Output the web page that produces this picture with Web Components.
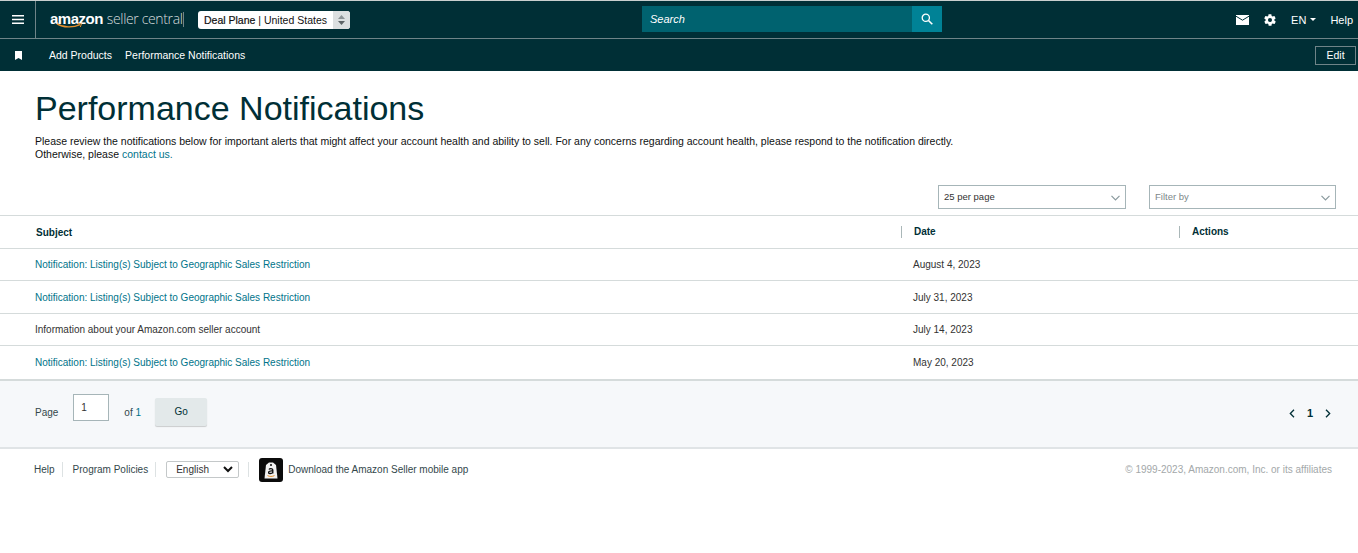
<!DOCTYPE html>
<html lang="en">
<head>
<meta charset="utf-8">
<title>Performance Notifications</title>
<style>
  html, body { margin: 0; padding: 0; background: #fff; }
  body { font-family: "Liberation Sans", Arial, sans-serif; color: #002f36; width: 1358px; height: 553px; overflow: hidden; }
</style>
</head>
<body>
<sc-topbar></sc-topbar>
<sc-navbar></sc-navbar>
<sc-page-head></sc-page-head>
<sc-filters></sc-filters>
<sc-table></sc-table>
<sc-pager></sc-pager>
<sc-footer></sc-footer>

<script>
class ScTopbar extends HTMLElement {
  constructor() {
    super();
    this.attachShadow({ mode: "open" });
    this.shadowRoot.innerHTML = `
      <style>
        :host { display: flex; align-items: stretch; height: 37px; background: #002f36; border-top: 1px solid #c9cfcf; box-sizing: content-box; margin-top: 0; color: #fff; }
        .burger { width: 35px; display: flex; align-items: center; justify-content: center; border-right: 1px solid #6f8488; box-sizing: content-box; }
        .left { width: 606px; display: flex; align-items: center; }
        .logo { margin-left: 14px; width: 120px; height: 24px; display: flex; align-items: baseline; color: #e6eaea; position: relative; white-space: nowrap; line-height: 22px; }
        .logo b { font-size: 15px; letter-spacing: -.5px; color: #fff; }
        .logo span { font-size: 14px; margin-left: 4px; letter-spacing: -.35px; color: #d5dcdd; font-family: "Open Sans", "Liberation Sans", sans-serif; font-weight: 300; }
        .logo svg { position: absolute; left: 6px; top: 15px; }
        .sep { width: 1px; height: 15px; background: #6f8488; margin-left: 13px; }
        .acct { margin-left: 14px; width: 152px; height: 18px; background: #fff; border-radius: 3px; display: flex; overflow: hidden; color: #111; font-size: 10.5px; line-height: 18px; }
        .acct .txt { flex: 1; padding-left: 6px; white-space: nowrap; }
        .acct .txt b { font-weight: normal; -webkit-text-stroke: .2px #111; }
        .acct .spin { width: 17px; background: #dcdfe0; display: flex; flex-direction: column; align-items: center; justify-content: center; gap: 2px; }
        .search { width: 300px; height: 26px; margin-top: 5px; display: flex; background: #00626f; }
        .search .box { flex: 1; font-size: 11px; font-style: italic; line-height: 26px; padding-left: 8px; }
        .search .btn { width: 30px; background: #008296; display: flex; align-items: center; justify-content: center; }
        .right { flex: 1; display: flex; align-items: center; justify-content: flex-end; font-size: 11px; padding-right: 5px; }
        .mail { margin-right: 14px; display: flex; }
        .gear { margin-right: 14px; display: flex; }
        .lang { display: flex; align-items: center; gap: 4px; margin-right: 14px; }
      </style>
      <div class="burger">
        <svg width="12" height="9" viewBox="0 0 12 9"><path d="M0 .75h12M0 4.5h12M0 8.25h12" stroke="#fff" stroke-width="1.5"/></svg>
      </div>
      <div class="left">
        <div class="logo"><b>amazon</b><span>seller central</span>
          <svg width="27" height="6" viewBox="0 0 27 6"><path d="M1 .8C7 4.6 17 5 24 1.6" fill="none" stroke="#e8912d" stroke-width="1.4"/><path d="M21.5 .6l4 .2-1.2 3.2" fill="none" stroke="#e8912d" stroke-width="1"/></svg>
        </div>
        <div class="sep"></div>
        <div class="acct">
          <div class="txt"><b>Deal Plane</b> | United States</div>
          <div class="spin">
            <svg width="7" height="4" viewBox="0 0 7 4"><path d="M3.5 0L7 4H0z" fill="#8d9396"/></svg>
            <svg width="7" height="4" viewBox="0 0 7 4"><path d="M0 0h7L3.5 4z" fill="#5d6366"/></svg>
          </div>
        </div>
      </div>
      <div class="search">
        <div class="box">Search</div>
        <div class="btn">
          <svg width="12" height="12" viewBox="0 0 12 12"><circle cx="4.8" cy="4.8" r="3.6" fill="none" stroke="#fff" stroke-width="1.3"/><path d="M7.5 7.5l3.8 3.8" stroke="#fff" stroke-width="1.6"/></svg>
        </div>
      </div>
      <div class="right">
        <span class="mail"><svg width="13" height="10" viewBox="0 0 13 10"><path d="M0 0h13v10H0z" fill="#fff"/><path d="M0 1.2l6.5 4 6.5-4" fill="none" stroke="#002f36" stroke-width="1"/></svg></span>
        <span class="gear"><svg width="14" height="14" viewBox="0 0 24 24"><path fill="#fff" d="M19.4 13c.1-.3.1-.7.1-1s0-.7-.1-1l2.1-1.6c.2-.2.2-.4.1-.6l-2-3.5c-.1-.2-.4-.3-.6-.2l-2.5 1c-.5-.4-1.1-.7-1.700-1l-.4-2.600c0-.3-.2-.4-.5-.4h-4c-.3 0-.5.1-.5.4l-.4 2.600c-.6.3-1.200.6-1.700 1l-2.500-1c-.2-.1-.5 0-.6.2l-2 3.500c-.1.2-.1.4.1.6L4.600 11c-.1.3-.1.7-.1 1s0 .7.1 1l-2.100 1.600c-.2.2-.2.4-.1.6l2 3.500c.1.2.4.3.6.2l2.500-1c.5.4 1.100.7 1.700 1l.4 2.600c0 .3.2.4.5.4h4c.3 0 .5-.1.5-.4l.4-2.600c.6-.3 1.200-.6 1.700-1l2.500 1c.2.1.5 0 .6-.2l2-3.500c.1-.2.1-.4-.1-.6zM12 15.500a3.500 3.500 0 1 1 0-7 3.500 3.500 0 0 1 0 7z"/></svg></span>
        <span class="lang">EN <svg width="6" height="3" viewBox="0 0 6 3"><path d="M0 0h6L3 3z" fill="#fff"/></svg></span>
        <span>Help</span>
      </div>`;
  }
}
customElements.define("sc-topbar", ScTopbar);

class ScNavbar extends HTMLElement {
  constructor() {
    super();
    this.attachShadow({ mode: "open" });
    this.shadowRoot.innerHTML = `
      <style>
        :host { display: flex; align-items: center; height: 32px; background: #002f36; border-top: 1px solid #6f8488; color: #fff; font-size: 10.5px; }
        .mark { width: 36px; display: flex; justify-content: center; }
        .links { margin-left: 13px; display: flex; gap: 13px; }
        .edit { margin-left: auto; margin-right: 2px; width: 39px; height: 17px; border: 1px solid #6f8488; text-align: center; line-height: 17px; }
      </style>
      <span class="mark"><svg width="7" height="9" viewBox="0 0 7 9"><path d="M0 0h7v9L3.500 7 0 9z" fill="#fff"/></svg></span>
      <div class="links"><span>Add Products</span><span>Performance Notifications</span></div>
      <span class="edit">Edit</span>`;
  }
}
customElements.define("sc-navbar", ScNavbar);

class ScPageHead extends HTMLElement {
  constructor() {
    super();
    this.attachShadow({ mode: "open" });
    this.shadowRoot.innerHTML = `
      <style>
        :host { display: block; padding: 18px 0 0 35px; height: 95px; box-sizing: border-box; color: #002f36; }
        h1 { margin: 0; font-weight: normal; font-size: 34px; line-height: 38px; }
        p { margin: 8px 0 0; font-size: 10.5px; line-height: 13px; color: #0f1111; }
        a { color: #00748a; text-decoration: none; }
      </style>
      <h1>Performance Notifications</h1>
      <p>Please review the notifications below for important alerts that might affect your account health and ability to sell. For any concerns regarding account health, please respond to the notification directly.<br>Otherwise, please <a>contact us.</a></p>`;
  }
}
customElements.define("sc-page-head", ScPageHead);

class ScSelectBox extends HTMLElement {
  constructor() {
    super();
    this.attachShadow({ mode: "open" });
    this.shadowRoot.innerHTML = `
      <style>
        :host { display: flex; align-items: center; justify-content: space-between; box-sizing: border-box; height: 24px; border: 1px solid #a6b5b8; padding: 0 5px 2px; font-size: 9.5px; color: var(--c, #333); }
      </style>
      <span><slot></slot></span>
      <svg width="9" height="6" viewBox="0 0 9 6" style="margin-top:3px"><path d="M.5.8l4 4 4-4" fill="none" stroke="#8a9a9e" stroke-width="1.200"/></svg>`;
  }
}
customElements.define("sc-select-box", ScSelectBox);

class ScFilters extends HTMLElement {
  constructor() {
    super();
    this.attachShadow({ mode: "open" });
    this.shadowRoot.innerHTML = `
      <style>
        :host { display: flex; justify-content: flex-end; gap: 23px; height: 30px; padding-top: 19px; padding-right: 22px; }
        sc-select-box { width: 188px; }
        sc-select-box.f { width: 187px; --c: #7d878a; }
      </style>
      <sc-select-box>25 per page</sc-select-box>
      <sc-select-box class="f">Filter by</sc-select-box>`;
  }
}
customElements.define("sc-filters", ScFilters);

class ScTable extends HTMLElement {
  constructor() {
    super();
    this.attachShadow({ mode: "open" });
    const rows = [
      ["Notification: Listing(s) Subject to Geographic Sales Restriction", "August 4, 2023", true, 32],
      ["Notification: Listing(s) Subject to Geographic Sales Restriction", "July 31, 2023", true, 33],
      ["Information about your Amazon.com seller account", "July 14, 2023", false, 32],
      ["Notification: Listing(s) Subject to Geographic Sales Restriction", "May 20, 2023", true, 33]
    ];
    this.shadowRoot.innerHTML = `
      <style>
        :host { display: block; border-top: 1px solid #d5dbdb; border-bottom: 2px solid #d5dbdb; font-size: 10px; color: #333; }
        .row { display: grid; grid-template-columns: 901px 278px 1fr; align-items: center; box-sizing: border-box; border-bottom: 1px solid #d5dbdb; }
        .row:last-child { border-bottom: 0; }
        .row > div { padding-left: 35px; white-space: nowrap; }
        .row > div + div { padding-left: 12px; }
        .head { height: 33px; font-weight: bold; color: #002f36; }
        .head > div { padding-left: 36px !important; }
        .head > div + div { padding-left: 12px !important; border-left: 1px solid #aab7b8; height: 12px; line-height: 12px; }
        a { color: #00748a; text-decoration: none; }
      </style>
      <div class="row head"><div>Subject</div><div>Date</div><div>Actions</div></div>
      ${rows.map(r => `
        <div class="row" style="height:${r[3]}px">
          <div>${r[2] ? `<a>${r[0]}</a>` : r[0]}</div>
          <div>${r[1]}</div>
          <div></div>
        </div>
      `).join("")}`;
  }
}
customElements.define("sc-table", ScTable);

class ScPager extends HTMLElement {
  constructor() {
    super();
    this.attachShadow({ mode: "open" });
    this.shadowRoot.innerHTML = `
      <style>
        :host { display: flex; align-items: flex-start; height: 66px; box-sizing: content-box; background: #f6f8fa; border-bottom: 2px solid #e0e4e6; font-size: 10px; color: #33474b; padding-left: 35px; }
        .lbl { margin-top: 26px; }
        .input { margin: 13px 0 0 15px; width: 36px; height: 27px; box-sizing: border-box; background: #fff; border: 1px solid #a6b5b8; padding: 7px 0 0 7px; color: #333; }
        .of { margin: 26px 0 0 15px; }
        .of a { color: #00748a; }
        .go { margin: 17px 0 0 14px; width: 52px; height: 28px; background: #e3e9ea; border-radius: 2px; box-shadow: 0 1px 1px rgba(0,0,0,.18); text-align: center; line-height: 27px; color: #002f36; }
        .nav { margin: 26px 27px 0 auto; display: flex; align-items: center; gap: 12px; font-weight: bold; color: #002f36; font-size: 11px; }
        .nav svg { display: block; }
      </style>
      <span class="lbl">Page</span>
      <div class="input">1</div>
      <span class="of">of <a>1</a></span>
      <div class="go">Go</div>
      <div class="nav">
        <svg width="6" height="9" viewBox="0 0 6 9"><path d="M5 .7L1.300 4.500 5 8.300" fill="none" stroke="#002f36" stroke-width="1.300"/></svg>
        <span>1</span>
        <svg width="6" height="9" viewBox="0 0 6 9"><path d="M1 .7l3.700 3.800L1 8.300" fill="none" stroke="#002f36" stroke-width="1.300"/></svg>
      </div>`;
  }
}
customElements.define("sc-pager", ScPager);

class ScFooter extends HTMLElement {
  constructor() {
    super();
    this.attachShadow({ mode: "open" });
    this.shadowRoot.innerHTML = `
      <style>
        :host { display: flex; align-items: center; height: 41px; padding-left: 34px; font-size: 10px; color: #33474b; }
        .bar { width: 1px; height: 15px; background: #dde2e3; }
        .lang { box-sizing: border-box; width: 73px; height: 17px; border: 1px solid #c4c8c9; border-radius: 2px; display: flex; align-items: center; justify-content: space-between; padding: 0 5px 0 9px; color: #333; background: #fff; }
        .app { width: 24px; height: 24px; border-radius: 3px; background: #0b0b0b; display: flex; align-items: center; justify-content: center; margin: 0 5px 0 10px; }
        .copy { margin-left: auto; margin-right: 26px; color: #a3a8a9; }
      </style>
      <span>Help</span><div class="bar" style="margin:0 10px 0 7px"></div>
      <span>Program Policies</span><div class="bar" style="margin:0 10px 0 7px"></div>
      <div class="lang">English
        <svg width="10" height="7" viewBox="0 0 10 7"><path d="M1 1l4 4 4-4" fill="none" stroke="#111" stroke-width="2"/></svg>
      </div>
      <div class="bar" style="margin-left:9px"></div>
      <div class="app">
        <svg width="16" height="20" viewBox="0 0 16 20">
          <path d="M3 5l3-2.500h4L13 5l1.500 13.500h-13z" fill="#f2f2f2"/>
          <circle cx="8" cy="5" r="1" fill="#0b0b0b"/>
          <path d="M6 9.500c.5-1 3.500-1.200 3.800.3v3.700M9.800 11c-3-.3-4.300.5-4.200 1.600.1 1.300 3 1.200 4.200-.2" fill="none" stroke="#0b0b0b" stroke-width="1.300"/>
          <path d="M4.500 15.600c2 1.100 4.800 1.100 7 0" fill="none" stroke="#e8912d" stroke-width="1"/>
        </svg>
      </div>
      <span>Download the Amazon Seller mobile app</span>
      <span class="copy">© 1999-2023, Amazon.com, Inc. or its affiliates</span>`;
  }
}
customElements.define("sc-footer", ScFooter);
</script>
</body>
</html>
